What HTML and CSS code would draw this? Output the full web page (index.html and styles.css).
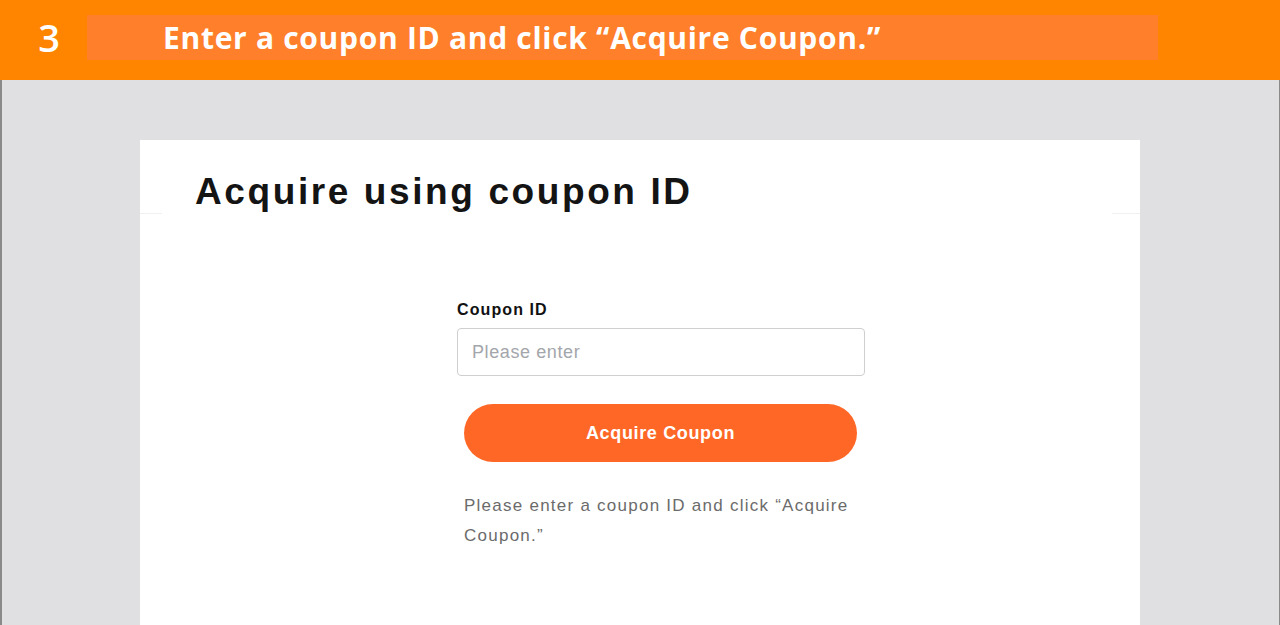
FILE: index.html
```html
<!DOCTYPE html>
<html lang="en">
<head>
  <meta charset="UTF-8" />
  <meta name="viewport" content="width=device-width, initial-scale=1.0" />
  <title>Acquire using coupon ID</title>
  <link rel="stylesheet" href="styles.css">
</head>
<body>
  <div class="step-bar">
    <span class="step-num">3</span>
    <div class="step-text">Enter a coupon ID and click “Acquire Coupon.”</div>
  </div>

  <div class="stage">
    <div class="card">
      <div class="card-head">
        <h1 class="card-title">Acquire using coupon ID</h1>
      </div>
      <div class="card-body">
        <form class="coupon-form" onsubmit="return false;">
          <label class="field-label" for="coupon-id">Coupon ID</label>
          <input class="field-input" id="coupon-id" type="text" placeholder="Please enter" />
          <div class="form-inner">
            <button type="submit" class="btn-acquire">Acquire Coupon</button>
            <p class="hint">Please enter a coupon ID and click “Acquire Coupon.”</p>
          </div>
        </form>
      </div>
    </div>
  </div>
</body>
</html>
```

FILE: styles.css
```css
html, body {
  margin: 0;
  height: 100%;
}
body {
  font-family: "Liberation Sans", Arial, sans-serif;
  background: #e0e0e2;
  overflow: hidden;
}
.step-bar {
  height: 80px;
  background: #ff8500;
  display: flex;
  align-items: flex-start;
  box-sizing: border-box;
  padding-top: 15px;
}
.step-num {
  width: 87px;
  box-sizing: border-box;
  padding-left: 11px;
  text-align: center;
  font-family: "Open Sans", sans-serif;
  font-size: 38px;
  font-weight: 600;
  line-height: 48px;
  color: #fff;
  margin-top: -2px;
}
.step-text {
  width: 1071px;
  height: 45px;
  background: #ff7f2a;
  box-sizing: border-box;
  padding-left: 76px;
  font-family: "Open Sans", sans-serif;
  font-weight: 700;
  font-size: 30px;
  line-height: 45px;
  letter-spacing: 0.7px;
  color: #fff;
}
.stage {
  height: calc(100% - 80px);
  border-left: 2px solid #8a8a8a;
  border-right: 1px solid #8a8a8a;
  box-sizing: border-box;
  padding: 60px 139px 0 138px;
}
.card {
  background: #fff;
  height: 100%;
}
.card-head {
  height: 73px;
  border-bottom: 1px solid #f0f0f0;
  padding: 0 28px 0 22px;
  box-sizing: content-box;
}
.card-title {
  margin: 0 0 -1px;
  height: 74px;
  background: #fff;
  box-sizing: border-box;
  padding: 30px 0 0 33px;
  font-size: 37px;
  line-height: 44px;
  font-weight: 700;
  letter-spacing: 2.6px;
  color: #141414;
}
.card-body {
  display: flex;
  justify-content: center;
  padding: 86px 0 0 42px;
}
.coupon-form {
  width: 408px;
}
.field-label {
  display: block;
  font-size: 16px;
  line-height: 20px;
  font-weight: 700;
  letter-spacing: 1.1px;
  color: #111;
  margin-bottom: 8px;
}
.field-input {
  display: block;
  width: 100%;
  height: 48px;
  box-sizing: border-box;
  border: 1px solid #cfcfcf;
  border-radius: 4px;
  padding: 0 14px;
  font-family: "Liberation Sans", Arial, sans-serif;
  font-size: 18px;
  letter-spacing: 0.6px;
  color: #333;
  outline: none;
}
.field-input::placeholder {
  color: #a3a6ab;
}
.form-inner {
  padding: 0 8px 0 7px;
}
.btn-acquire {
  display: block;
  width: 100%;
  height: 58px;
  margin-top: 28px;
  border: none;
  border-radius: 29px;
  background: #ff6726;
  color: #fff;
  font-family: "Liberation Sans", Arial, sans-serif;
  font-size: 18px;
  font-weight: 700;
  letter-spacing: 0.65px;
  cursor: pointer;
}
.hint {
  margin: 29px 0 0;
  font-size: 17px;
  line-height: 30px;
  letter-spacing: 1.25px;
  color: #6b6b6b;
}
```
